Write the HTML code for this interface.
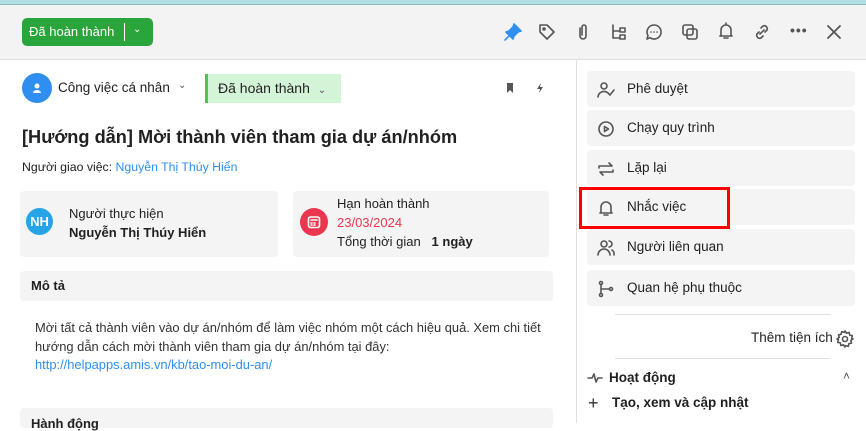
<!DOCTYPE html>
<html><head><meta charset="utf-8"><style>
*{box-sizing:border-box;margin:0;padding:0}
body{width:866px;height:423px;overflow:hidden;background:#fff;font-family:"Liberation Sans",sans-serif;color:#212121;position:relative}
.a{position:absolute}
svg{position:absolute;fill:none;stroke:#555;stroke-width:1.6;stroke-linecap:round;stroke-linejoin:round}
.item{position:absolute;left:587px;width:268px;height:36px;background:#f4f4f4;border-radius:4px;font-size:13.5px;line-height:36px;padding-left:40px}
.item svg{left:9px;top:9px}
</style></head><body>
<div class="a" style="left:0;top:0;width:866px;height:5px;background:#b3dfe4;border-bottom:1px solid #8fb7bc"></div>
<div class="a" style="left:0;top:5px;width:866px;height:55px;background:#f3f3f3;border-bottom:1px solid #e0e0e0"></div>
<div class="a" style="left:22px;top:18px;width:131px;height:28px;background:#2aa53b;border-radius:5px;color:#fff;font-size:13px;line-height:28px;padding-left:7px">Đã hoàn thành</div>
<div class="a" style="left:124px;top:23px;width:1px;height:18px;background:#fff"></div>
<div class="a" style="left:133px;top:24px;color:#fff;font-size:10px">&#8964;</div>
<svg style="left:503px;top:22px" width="20" height="20" viewBox="0 0 20 20"><path d="M11 2l7 7-3 1-4 4-1 3-7-7 3-1 4-4z M6 14l-4 4" fill="#2f8ff0" stroke="#2f8ff0"/></svg>
<svg style="left:537px;top:22px" width="20" height="20" viewBox="0 0 20 20"><path d="M3 3h7l7 7-7 7-7-7z"/><circle cx="7" cy="7" r="1"/></svg>
<svg style="left:573px;top:22px" width="20" height="20" viewBox="0 0 20 20"><path d="M7 6v8a3 3 0 006 0V5a2 2 0 00-4 0v8"/></svg>
<svg style="left:609px;top:22px" width="20" height="20" viewBox="0 0 20 20"><path d="M4 3v13h6M4 9h6M11 6h5v4h-5zM11 13h5v4h-5z"/></svg>
<svg style="left:644px;top:22px" width="20" height="20" viewBox="0 0 20 20"><path d="M10 3a7 7 0 11-4 12.7L3 17l1-3.5A7 7 0 0110 3z"/><path d="M7 10h.1M10 10h.1M13 10h.1"/></svg>
<svg style="left:680px;top:22px" width="20" height="20" viewBox="0 0 20 20"><rect x="3" y="3" width="10" height="10" rx="2"/><rect x="7" y="7" width="10" height="10" rx="2"/></svg>
<svg style="left:716px;top:21px" width="20" height="20" viewBox="0 0 20 20"><path d="M5 14V9a5 5 0 0110 0v5l1 1H4z M8 17h4 M10 2v2"/></svg>
<svg style="left:752px;top:22px" width="20" height="20" viewBox="0 0 20 20"><path d="M8 12l4-4M9 6l2-2a3 3 0 014 4l-2 2M11 14l-2 2a3 3 0 01-4-4l2-2"/></svg>
<div class="a" style="left:790px;top:22px;font-size:14px;font-weight:bold;color:#555;letter-spacing:1px">•••</div>
<svg style="left:824px;top:22px" width="20" height="20" viewBox="0 0 20 20"><path d="M4 4l12 12M16 4L4 16" stroke-width="1.8"/></svg>
<div class="a" style="left:576px;top:60px;width:1px;height:363px;background:#e0e0e0"></div>
<div class="a" style="left:22px;top:73px;width:30px;height:30px;border-radius:50%;background:#2f8ff0"></div>
<svg style="left:29px;top:80px" width="16" height="16" viewBox="0 0 16 16"><circle cx="8" cy="6" r="2.5" fill="#fff" stroke="none"/><path d="M4 13a4 3 0 018 0z" fill="#fff" stroke="none"/></svg>
<div class="a" style="left:58px;top:80px;font-size:13.5px">Công việc cá nhân</div>
<div class="a" style="left:178px;top:80px;font-size:10px;color:#555">&#8964;</div>
<div class="a" style="left:205px;top:74px;width:136px;height:29px;background:#d4f4d8;border-left:3px solid #4cc25a;font-size:14px;line-height:29px;padding-left:10px">Đã hoàn thành <span style="font-size:10px;color:#555;margin-left:4px">&#8964;</span></div>
<svg style="left:504px;top:82px" width="12" height="12" viewBox="0 0 12 12"><path d="M3 1h6v10L6 8 3 11z" fill="#555" stroke="none"/></svg>
<svg style="left:534px;top:82px" width="12" height="12" viewBox="0 0 12 12"><path d="M7 1L3 7h3l-1 4 4-6H6z" fill="#555" stroke="none"/></svg>
<div class="a" style="left:22px;top:127px;font-size:18.2px;font-weight:bold">[Hướng dẫn] Mời thành viên tham gia dự án/nhóm</div>
<div class="a" style="left:22px;top:160px;font-size:12.3px">Người giao việc: <span style="color:#2f8ff0">Nguyễn Thị Thúy Hiển</span></div>
<div class="a" style="left:20px;top:191px;width:258px;height:66px;background:#f4f4f4;border-radius:4px"></div>
<div class="a" style="left:26px;top:208px;width:27px;height:27px;border-radius:50%;background:#27a3e8;color:#fff;font-weight:bold;font-size:13px;line-height:27px;text-align:center">NH</div>
<div class="a" style="left:69px;top:206px;font-size:13px">Người thực hiện</div>
<div class="a" style="left:69px;top:225px;font-size:13px;font-weight:bold">Nguyễn Thị Thúy Hiển</div>
<div class="a" style="left:293px;top:191px;width:256px;height:66px;background:#f4f4f4;border-radius:4px"></div>
<div class="a" style="left:300px;top:208px;width:28px;height:28px;border-radius:50%;background:#e8374f"></div>
<svg style="left:306px;top:214px" width="16" height="16" viewBox="0 0 16 16"><rect x="2.5" y="3" width="11" height="10.5" rx="2" stroke="#fff"/><path d="M5 6h6M5 9h1M8 9h1M5 11h1M8 11h1" stroke="#fff"/></svg>
<div class="a" style="left:337px;top:196px;font-size:13px">Hạn hoàn thành</div>
<div class="a" style="left:337px;top:215px;font-size:13px;color:#e8374f">23/03/2024</div>
<div class="a" style="left:337px;top:234px;font-size:13px">Tổng thời gian &nbsp;&nbsp;<b>1 ngày</b></div>
<div class="a" style="left:20px;top:271px;width:533px;height:30px;background:#f4f4f4;border-radius:4px;font-size:13px;font-weight:bold;line-height:30px;padding-left:11px">Mô tả</div>
<div class="a" style="left:35px;top:319px;width:520px;font-size:12.9px;line-height:18.5px;color:#333">Mời tất cả thành viên vào dự án/nhóm để làm việc nhóm một cách hiệu quả. Xem chi tiết hướng dẫn cách mời thành viên tham gia dự án/nhóm tại đây:<br><span style="color:#2f8ff0">http://helpapps.amis.vn/kb/tao-moi-du-an/</span></div>
<div class="a" style="left:20px;top:408px;width:533px;height:20px;background:#f4f4f4;border-radius:4px;font-size:13px;font-weight:bold;padding:8px 11px">Hành động</div>
<div class="item" style="top:71px"><svg width="20" height="20" viewBox="0 0 20 20"><circle cx="8" cy="6" r="3"/><path d="M2 17a6 6 0 0110-4M12 13l2 2 4-5"/></svg>Phê duyệt</div>
<div class="item" style="top:110px"><svg width="20" height="20" viewBox="0 0 20 20"><circle cx="10" cy="10" r="7"/><path d="M8.5 7.5v5l4-2.5z"/></svg>Chạy quy trình</div>
<div class="item" style="top:150px"><svg width="20" height="20" viewBox="0 0 20 20"><path d="M3 9V7h13l-3-3M17 11v2H4l3 3"/></svg>Lặp lại</div>
<div class="item" style="top:189px"><svg width="20" height="20" viewBox="0 0 20 20"><path d="M5 14V9a5 5 0 0110 0v5l1 1H4z M8 17h4"/></svg>Nhắc việc</div>
<div class="item" style="top:229px"><svg width="20" height="20" viewBox="0 0 20 20"><circle cx="8" cy="6" r="3"/><path d="M2 17a6 6 0 0112 0M13 3a3 3 0 010 6M16 12a5 5 0 012 5"/></svg>Người liên quan</div>
<div class="item" style="top:270px"><svg width="20" height="20" viewBox="0 0 20 20"><circle cx="5" cy="4" r="1.5"/><circle cx="5" cy="16" r="1.5"/><circle cx="15" cy="10" r="1.5"/><path d="M5 5.5v9M5 10h8.5"/></svg>Quan hệ phụ thuộc</div>
<div class="a" style="left:579px;top:187px;width:151px;height:42px;border:3px solid #f00"></div>
<div class="a" style="left:615px;top:314px;width:215px;height:1px;background:#e0e0e0"></div>
<div class="a" style="left:751px;top:330px;font-size:13.5px">Thêm tiện ích</div>
<svg style="left:835px;top:329px" width="20" height="20" viewBox="0 0 20 20"><circle cx="10" cy="10" r="2.5"/><path d="M10 2l1.5 2.2 2.6-.7.6 2.6 2.6.6-.7 2.6L18 10l-2.2 1.5.7 2.6-2.6.6-.6 2.6-2.6-.7L10 18l-1.5-2.2-2.6.7-.6-2.6-2.6-.6.7-2.6L2 10l2.2-1.5-.7-2.6 2.6-.6.6-2.6 2.6.7z"/></svg>
<div class="a" style="left:615px;top:358px;width:215px;height:1px;background:#e0e0e0"></div>
<svg style="left:587px;top:370px" width="16" height="16" viewBox="0 0 16 16"><path d="M1 8h4l2-4 2 8 2-4h4"/></svg>
<div class="a" style="left:609px;top:370px;font-size:13.5px;font-weight:bold">Hoạt động</div>
<div class="a" style="left:843px;top:369px;font-size:12px;color:#555">&#708;</div>
<div class="a" style="left:588px;top:396px;font-size:18px;color:#333;line-height:14px">+</div>
<div class="a" style="left:612px;top:395px;font-size:13.5px;font-weight:bold">Tạo, xem và cập nhật</div>
</body></html>
